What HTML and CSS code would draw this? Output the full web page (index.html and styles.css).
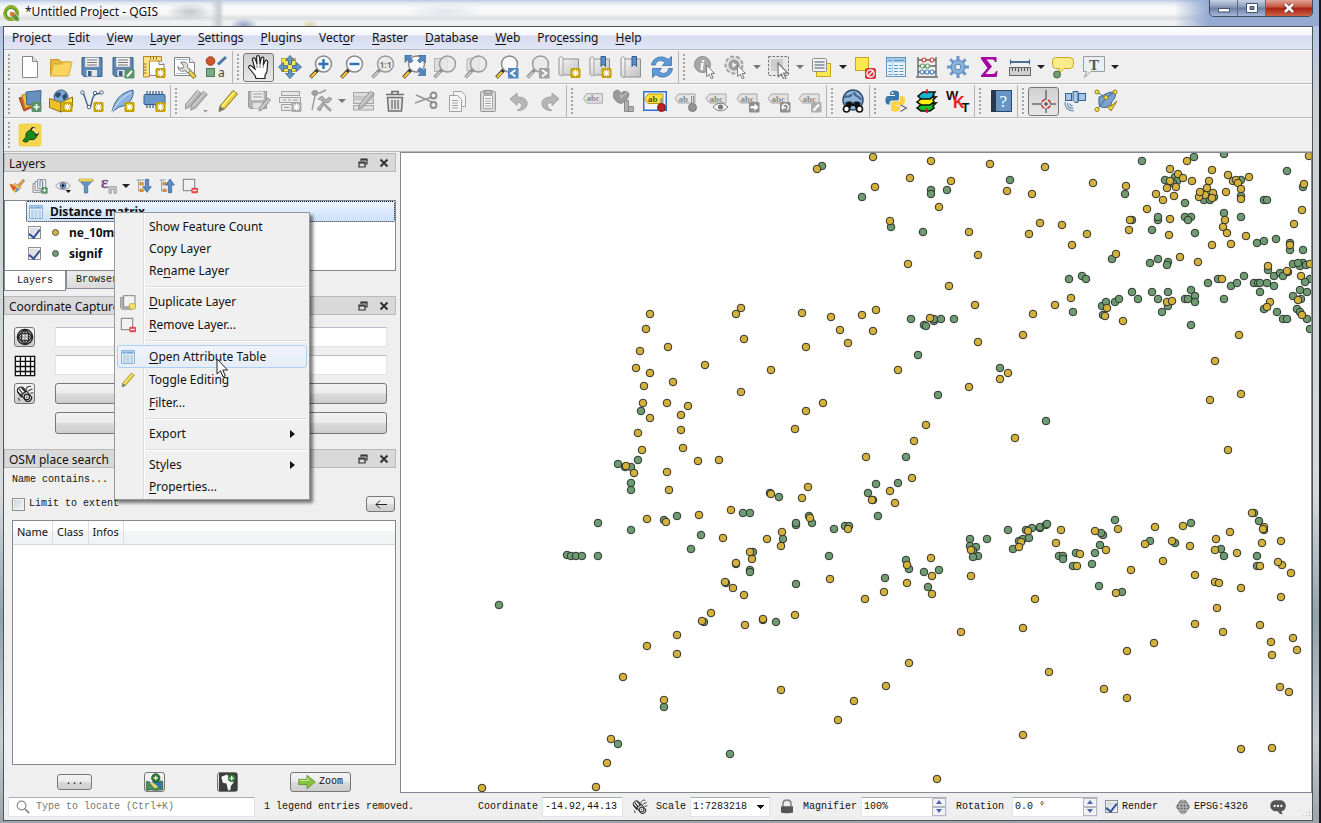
FILE: index.html
```html
<!DOCTYPE html>
<html lang="en">
<head>
<meta charset="utf-8">
<title>*Untitled Project - QGIS</title>
<link rel="stylesheet" href="styles.css">
</head>
<body>
<svg class="defs" aria-hidden="true">
<defs>
<linearGradient id="gy" x1="0" y1="0" x2="0" y2="1"><stop offset="0" stop-color="#fff9a0"/><stop offset="1" stop-color="#fbdd3a"/></linearGradient>
<linearGradient id="gg" x1="0" y1="0" x2="1" y2="1"><stop offset="0" stop-color="#fdfdfd"/><stop offset="1" stop-color="#bdbdbd"/></linearGradient>
<marker id="my" markerWidth="10" markerHeight="10" refX="5" refY="5" markerUnits="userSpaceOnUse"><circle cx="5" cy="5" r="3.8" fill="#d3b13a" stroke="#2f2f2c"/></marker>
<marker id="mg" markerWidth="10" markerHeight="10" refX="5" refY="5" markerUnits="userSpaceOnUse"><circle cx="5" cy="5" r="3.8" fill="#6f9b72" stroke="#2c352d"/></marker>

<g id="star"><rect x="13.500" y="13" width="10" height="10" rx="1.500" fill="#c4a000"/><path d="M18.500 14.500v7M15 18h7M16 15.500l5 5M21 15.500l-5 5" stroke="#fff" stroke-width="1.200"/></g>
<g id="stargray"><rect x="13.500" y="13" width="10" height="10" rx="1.500" fill="#a9a9a9"/><path d="M18.500 14.500v7M15 18h7M16 15.500l5 5M21 15.500l-5 5" stroke="#fff" stroke-width="1.200"/></g>
<g id="lens"><path d="M9.500 14L1.500 22.500" stroke="#333" stroke-width="3.600"/><path d="M7 17L2 22.300" stroke="#fcc72e" stroke-width="2.400"/><circle cx="14.500" cy="9" r="8" fill="#f6f8fa" stroke="#888" stroke-width="1.400"/></g>
<g id="lensgray"><path d="M9.500 14L1.500 22.500" stroke="#909090" stroke-width="3.400"/><path d="M7 17L2 22.300" stroke="#cfcfcf" stroke-width="1.600"/><circle cx="14.500" cy="9" r="8" fill="#e9e9e9" fill-opacity=".8" stroke="#999" stroke-width="1.400"/></g>
<g id="tag"><path d="M1.500 12L5 7h16.500v10H5z" fill="#e4e4e4" stroke="#a4a4a4"/><text x="5" y="15" font-family="Liberation Serif" font-weight="bold" font-size="9" fill="#8a8a8a">abc</text></g>
<g id="tagsm"><path d="M1 9.500L4.500 5H21v9H4.500z" fill="#e4e4e4" stroke="#a4a4a4"/><text x="4.500" y="12.500" font-family="Liberation Serif" font-weight="bold" font-size="9" fill="#8a8a8a">abc</text></g>
<g id="cursor"><path d="M0 0l8 8.500H4.600l2 4.500-1.800.8-2-4.600L.2 11.500z" fill="#fff" stroke="#777"/></g>
<g id="floppy"><path d="M2 2.500h20v19H4L2 19.500z" fill="#5b86b8" stroke="#3d618b"/><path d="M5 2.500h14v9.500H5z" fill="#f3f3f3" stroke="#9a9a9a" stroke-width=".6"/><path d="M7 5h10M7 7.500h10M7 10h10" stroke="#777"/><path d="M6.500 15h10.500v6.500H6.500z" fill="#e8e8e8"/><path d="M8 16h3.500v5H8z" fill="#3c5e87"/></g>
<g id="pencil"><path d="M4 17L17 1.500l4.500 3.500L8.500 20 3 22.500z" fill="#e9cf3b" stroke="#8a7726"/><path d="M5.500 18L18.500 3" stroke="#fff39a" stroke-width="1.500"/><path d="M4 17l4.500 3L3 22.500z" fill="#777"/></g>
<g id="pencilgray"><path d="M4 17L17 1.500l4.500 3.500L8.500 20 3 22.500z" fill="#b4b4b4" stroke="#929292"/><path d="M5.500 18L18.500 3" stroke="#d6d6d6" stroke-width="1.300"/></g>
<g id="tablei"><rect x="2.500" y="2.500" width="19" height="19" fill="#e8f3fb" stroke="#6594bd"/><path d="M3 3h18v4.500H3z" fill="#a3cae8"/><path d="M8.500 7.500v14" stroke="#a9cce8"/><path d="M4.500 5.500h3M10 5.500h9.500M4.500 10.500h3M10 10.500h4M15.500 10.500h4M4.500 13.500h3M10 13.500h4M15.500 13.500h4M4.500 16.500h3M10 16.500h4M15.500 16.500h4M4.500 19.500h3M10 19.500h4M15.500 19.500h4" stroke="#5f93c1"/></g>

<symbol id="new" viewBox="0 0 24 24"><path d="M4.500 1.500h10l5 5v16h-15z" fill="#fff" stroke="#858585"/><path d="M14.500 1.500v5h5" fill="#e5e5e5" stroke="#858585"/></symbol>
<symbol id="open" viewBox="0 0 24 24"><path d="M1.500 21V4.500H10l2 2.500h9v4" fill="#e5b83c" stroke="#c8962a"/><path d="M1.500 21l3-12h8l2-2H23l-3.500 14z" fill="#fbd560" stroke="#d9a936"/></symbol>
<symbol id="save" viewBox="0 0 24 24"><use href="#floppy"/></symbol>
<symbol id="saveas" viewBox="0 0 24 24"><use href="#floppy"/><rect x="13.500" y="14" width="10" height="9.500" rx="1.500" fill="#5a9167"/><path d="M16 21.500l5-5.500" stroke="#fff" stroke-width="2"/></symbol>
<symbol id="layout" viewBox="0 0 24 24"><path d="M5 4.500h12l5 5v11H5z" fill="#fff" stroke="#858585"/><path d="M17 4.500v5h5" fill="#eee" stroke="#858585"/><path d="M1.500 1.500h18v4.500H7.500v16h-6z" fill="#fbe287" stroke="#b58a1a"/><path d="M8.500 2v2.500M11.500 2v2.500M14.500 2v2.500M2 9h2.500M2 12h2.500M2 15h2.500M2 18h2.500" stroke="#8a6d1a"/><use href="#star"/></symbol>
<symbol id="layouts" viewBox="0 0 24 24"><path d="M1.500 2.500h15l5 5v13h-20z" fill="#fff" stroke="#858585"/><path d="M16.500 2.500v5h5" fill="#eee" stroke="#858585"/><path d="M3.500 4.500h12M3.500 18.500h10" stroke="#9bb4cf"/><path d="M15 15l7 7.500" stroke="#7d6a25" stroke-width="4.500"/><path d="M15.500 15.500l6 6.500" stroke="#f0d050" stroke-width="2.800"/><path d="M7.500 7.500l3 3-.5 2.500-3 .5-2-2c0 4 4 6 7 4l3 2.500 2.500-2.500-3-3.500c1-4-2-6-7-4.500z" fill="#dcdcdc" stroke="#777"/></symbol>
<symbol id="style" viewBox="0 0 24 24"><circle cx="6.500" cy="6" r="4.300" fill="#cf552b" stroke="#9c3a18"/><path d="M14 9.500L22 2" stroke="#4f79a8" stroke-width="3"/><rect x="2.500" y="13.500" width="8" height="8" fill="#79ab84" stroke="#4d7d58"/><text x="14" y="22" font-family="Noto Sans" font-size="12" fill="#444">a</text></symbol>
<symbol id="hand" viewBox="0 0 24 24"><path d="M9 23.500l-1-3-6-7.500c-1-2 1-3.300 2.500-2L8 14 5.500 5c-.5-2.500 2.200-3 2.900-.8L10 9 9.600 2.500c0-2.400 2.800-2.400 3 0L13 9l1.100-5.500c.5-2.200 3-1.700 2.700.4L16.300 10l1.600-3.600c.9-2 3.200-1.200 2.800.9-.7 3.500 0 6.200-1 9.700L18 20.500v3z" fill="#fff" stroke="#222" stroke-width="1.200"/><path d="M10 9v4M13 9v4M16.300 10v3" stroke="#777"/></symbol>
<symbol id="pansel" viewBox="0 0 24 24"><rect x="3.500" y="3.500" width="14" height="13" fill="#fce94f" stroke="#c9a51d"/><path d="M12 0.500l4.500 5h-3v4h-3v-4h-3zM12 23.500l4.500-5h-3v-4h-3v4h-3zM.5 12l5-4.500v3h4v3h-4v3zM23.500 12l-5-4.500v3h-4v3h4v3z" fill="#6796c8" stroke="#355d8c" stroke-width=".8"/></symbol>
<symbol id="zin" viewBox="0 0 24 24"><use href="#lens"/><path d="M14.500 4v10M9.500 9h10" stroke="#2f6fb5" stroke-width="2.400"/></symbol>
<symbol id="zout" viewBox="0 0 24 24"><use href="#lens"/><path d="M9.500 9h10" stroke="#2f6fb5" stroke-width="2.400"/></symbol>
<symbol id="z11" viewBox="0 0 24 24"><use href="#lensgray"/><text x="8.500" y="12.500" font-family="Noto Sans" font-weight="bold" font-size="8.500" fill="#777">1:1</text></symbol>
<symbol id="zfull" viewBox="0 0 24 24"><use href="#lens"/><path d="M3 0h7L8 2.500l3 3L8.500 8l-3-3L3 7.500zM23.500 0v7.500L21 5l-3 3-2.500-2.500 3-3L16 0zM23.500 20.500H16l2.500-2.500-3-3 2.500-2.500 3 3 2.500-2.500z" fill="#5286bf" stroke="#315a88" stroke-width=".6"/></symbol>
<symbol id="zsel" viewBox="0 0 24 24"><rect x="1.500" y="3.500" width="13" height="13" fill="#dcdcdc" stroke="#b5b5b5"/><use href="#lensgray"/></symbol>
<symbol id="zlayer" viewBox="0 0 24 24"><path d="M3 4l12-2v14H3z" fill="#dedede" stroke="#b5b5b5"/><use href="#lensgray"/></symbol>
<symbol id="zlast" viewBox="0 0 24 24"><use href="#lens"/><rect x="13" y="13" width="10.500" height="10.500" fill="#5286bf"/><path d="M20.500 15l-4.500 3.200 4.500 3.200" fill="none" stroke="#fff" stroke-width="1.800"/></symbol>
<symbol id="znext" viewBox="0 0 24 24"><use href="#lensgray"/><rect x="13" y="13" width="10.500" height="10.500" fill="#a2a2a2"/><path d="M16 15l4.500 3.200-4.500 3.200" fill="none" stroke="#fff" stroke-width="1.800"/></symbol>
<symbol id="mapnew" viewBox="0 0 24 24"><path d="M2 3c2-2 4-1 4 1h15.500v16H6c-2 2-4 0-4-1z" fill="url(#gg)" stroke="#909090"/><path d="M6 4v16" stroke="#a2a2a2"/><use href="#star"/></symbol>
<symbol id="bmnew" viewBox="0 0 24 24"><path d="M2 3c2-2 4-1 4 1h15.500v16H6c-2 2-4 0-4-1z" fill="url(#gg)" stroke="#909090"/><path d="M6 4v16" stroke="#a2a2a2"/><path d="M13 1.500h4.500v10L15.200 9 13 11.500z" fill="#5c8fc6" stroke="#2f5b8d"/><use href="#star"/></symbol>
<symbol id="bm" viewBox="0 0 24 24"><path d="M2 3c2-2 4-1 4 1h15.500v18H6c-2 1-4 0-4-2z" fill="url(#gg)" stroke="#909090"/><path d="M6 4v18" stroke="#a2a2a2"/><path d="M13 1.500h4.500v10L15.200 9 13 11.500z" fill="#5c8fc6" stroke="#2f5b8d"/></symbol>
<symbol id="refresh" viewBox="0 0 24 24"><path d="M1.500 10C2 3 12-1 18 4.500L21.500 1.500v9h-9L15 7.500C11 4 6 5.500 5.500 10zM22.500 13.500C22 21 12 25 6 19.500l-3.500 3v-9h9L9 16.500c4 3.500 9 2 9.500-3z" fill="#5f9bd8" stroke="#3a70ab" stroke-width=".8"/></symbol>
<symbol id="info" viewBox="0 0 24 24"><circle cx="9.500" cy="9.500" r="8" fill="#a8a8a8" stroke="#8d8d8d"/><text x="7" y="15" font-family="Liberation Serif" font-style="italic" font-weight="bold" font-size="15" fill="#fff">i</text><use href="#cursor" x="13.500" y="10"/></symbol>
<symbol id="action" viewBox="0 0 24 24"><circle cx="10" cy="10" r="8.500" fill="#e2e2e2" stroke="#a0a0a0" stroke-width="2" stroke-dasharray="4 2"/><circle cx="10" cy="10" r="5" fill="#a2a2a2" stroke="#8e8e8e"/><path d="M8.500 7.500v5l4-2.500z" fill="#fff"/><use href="#cursor" x="13.500" y="10"/></symbol>
<symbol id="select" viewBox="0 0 24 24"><rect x="1.500" y="1.500" width="20" height="19" fill="#e6e6e6" stroke="#777" stroke-dasharray="2.500 1.500"/><rect x="4" y="4" width="12" height="12" fill="#cdcdcd"/><g transform="translate(11 8) scale(1.200)"><use href="#cursor"/></g></symbol>
<symbol id="selform" viewBox="0 0 24 24"><rect x="6.500" y="8.500" width="14" height="13" fill="#fce94f" stroke="#c9a51d"/><rect x="2.500" y="3.500" width="14" height="13" rx="1" fill="#f1f1f1" stroke="#8c8c8c"/><path d="M4.500 7h10M4.500 10h10M4.500 13h10" stroke="#7d8b98" stroke-width="1.400"/></symbol>
<symbol id="desel" viewBox="0 0 24 24"><rect x="2.500" y="2.500" width="13" height="13" fill="#fce94f" stroke="#c9a51d"/><rect x="12" y="13" width="11" height="11" rx="2" fill="#d8383e"/><circle cx="17.500" cy="18.500" r="3.600" fill="none" stroke="#fff" stroke-width="1.300"/><path d="M15 21l5-5" stroke="#fff" stroke-width="1.300"/></symbol>
<symbol id="table" viewBox="0 0 24 24"><use href="#tablei"/></symbol>
<symbol id="abacus" viewBox="0 0 24 24"><path d="M3 21V2M21 21V2M3 5h18M3 11h18M3 17h18M1 22h22" stroke="#666" stroke-width="1.400"/><g fill="#fff" stroke-width="1.200"><g stroke="#c33"><circle cx="9" cy="5" r="2"/><circle cx="17" cy="5" r="2"/></g><g stroke="#5a9a5e"><circle cx="7.500" cy="11" r="2"/><circle cx="12.500" cy="11" r="2"/></g><g stroke="#4a83bd"><circle cx="7" cy="17" r="2"/><circle cx="12" cy="17" r="2"/><circle cx="17" cy="17" r="2"/></g></g></symbol>
<symbol id="gear" viewBox="0 0 24 24"><path d="M12 1v22M1 12h22M4.300 4.300l15.400 15.400M19.700 4.300L4.300 19.700" stroke="#6a96cb" stroke-width="3"/><circle cx="12" cy="12" r="7" fill="#8ab0dc" stroke="#5a86bd"/><circle cx="12" cy="12" r="2.800" fill="#efefef" stroke="#5a86bd"/></symbol>
<symbol id="sigma" viewBox="0 0 24 24"><path d="M4 2h15.500v5h-1.500c-.5-2-1.500-2.500-4-2.500H9.500L15 11.500 8.500 19H15c2.500 0 3.500-1 4.200-3h1.300l-.8 6H4v-1.500L10.500 13 4 4z" fill="#a504a0"/></symbol>
<symbol id="ruler" viewBox="0 0 24 24"><path d="M2.500 7h19" stroke="#39628f" stroke-width="1.800"/><path d="M2.500 4.500v5M21.500 4.500v5" stroke="#39628f"/><rect x="1.500" y="12.500" width="21" height="8" fill="#cfcfcf" stroke="#666"/><path d="M4.500 13v3M7.500 13v3M10.500 13v4M13.500 13v3M16.500 13v3M19.500 13v3" stroke="#555"/></symbol>
<symbol id="tip" viewBox="0 0 24 24"><path d="M4.500 2.500h14q4 0 4 4v3q0 4-4 4H13l-6 6 1.500-6h-4q-3-.5-3-4v-3q0-4 3-4z" fill="#fbeb8c" stroke="#c9a51d"/><circle cx="6" cy="19.500" r="3.500" fill="#729e6f" stroke="#47663f"/></symbol>
<symbol id="anno" viewBox="0 0 24 24"><path d="M1.500 1.500h21v15H9l-6.500 6 2-6h-3z" fill="#e9f0f4" stroke="#949ea5"/><text x="7" y="14.500" font-family="Liberation Serif" font-weight="bold" font-size="15" fill="#555">T</text></symbol>

<symbol id="dsm" viewBox="0 0 24 24"><path d="M1 9l11-3 3 12-9 4z" fill="#d4572d" stroke="#96401d"/><path d="M4 6l12-3 2 13-11 3z" fill="#f0c23a" stroke="#b08a22"/><path d="M8 3l15-1.500-.5 14L9 16z" fill="#6590c0" stroke="#3c628f"/><rect x="13.500" y="13" width="10" height="10" rx="1.500" fill="#5a9167"/><path d="M18.500 15v6M15.500 18h6" stroke="#fff" stroke-width="1.600"/></symbol>
<symbol id="gpkg" viewBox="0 0 24 24"><circle cx="12" cy="8" r="7" fill="#7fa8d2" stroke="#39597d"/><path d="M7 4l4-1 1 3-3 3-3-2zM13 7l4-3 1 4-3 4z" fill="#2d4b70"/><path d="M.5 9.500L12 13.500v9.500L.5 18.500z" fill="#eec12c" stroke="#8c6f13"/><path d="M12 13.500L23.500 8v9.500L12 23z" fill="#fbe04c" stroke="#8c6f13"/><use href="#star"/></symbol>
<symbol id="shp" viewBox="0 0 24 24"><path d="M2.500 3.500c4 5 3 12 7 15 4-3 0-15 11-14" fill="none" stroke="#3f5f80" stroke-width="1.400"/><g fill="#fff" stroke="#3f5f80"><circle cx="2.500" cy="3.500" r="1.700"/><circle cx="9" cy="18" r="1.800"/><circle cx="15" cy="4" r="1.700"/><circle cx="21.500" cy="3.500" r="1.700"/></g><use href="#star"/></symbol>
<symbol id="feather" viewBox="0 0 24 24"><path d="M1 23C3 13 8 4 22 1c1 6-2 15-14 17z" fill="#8db4de" stroke="#3f6795"/><path d="M1 23C6 14 11 8 20 3.500" fill="none" stroke="#dce9f6"/><use href="#star"/></symbol>
<symbol id="chip" viewBox="0 0 24 24"><path d="M5 2v17M8 2v17M11 2v17M14 2v17M17 2v17M20 2v17" stroke="#3f618b" stroke-width="1.300"/><rect x="2" y="5.500" width="21" height="10" rx="1" fill="#6a98ca" stroke="#355d8c"/><use href="#star"/></symbol>
<symbol id="edits" viewBox="0 0 24 24"><g transform="translate(-3 0) scale(.9)"><use href="#pencilgray"/></g><g transform="translate(3 1) scale(.9)"><use href="#pencilgray"/></g><path d="M18 21h5l-2.500 2.500z" fill="#999"/></symbol>
<symbol id="edit" viewBox="0 0 24 24"><use href="#pencil"/></symbol>
<symbol id="saveed" viewBox="0 0 24 24"><path d="M1.500 2.500h18v17H3l-1.500-1.500z" fill="#b3b3b3" stroke="#999"/><path d="M4.500 2.500h12v8.500h-12z" fill="#efefef"/><path d="M6 5h9M6 8h9" stroke="#999"/><path d="M6 14h9v5.500H6z" fill="#e1e1e1"/><path d="M12 22l1-4 8-9 2.500 2-8 9.500z" fill="#c9c9c9" stroke="#8d8d8d"/></symbol>
<symbol id="addrec" viewBox="0 0 24 24"><g fill="#e7e7e7" stroke="#a2a2a2"><rect x="3.500" y="2.500" width="18" height="4"/><rect x="1.500" y="8.500" width="21" height="5"/><rect x="3.500" y="15.500" width="17" height="6"/></g><path d="M5 11h3M10 11h3M15 11h5M6 18.500h5" stroke="#a2a2a2"/><use href="#stargray"/></symbol>
<symbol id="vertex" viewBox="0 0 24 24"><path d="M2 4h9l6-3M6 1v6L3 21" fill="none" stroke="#9a9a9a" stroke-width="1.400"/><rect x="4" y="2" width="4" height="4" fill="#aaa" stroke="#888"/><path d="M9 10l4-3 4 4 3-3 3 2-4 4-3-1-5 9-3-2 7-8z" fill="#b2b2b2" stroke="#989898"/><path d="M13 13l9 9" stroke="#a3a3a3" stroke-width="2.500"/></symbol>
<symbol id="multi" viewBox="0 0 24 24"><g fill="#ddd" stroke="#a5a5a5"><rect x="1.500" y="3.500" width="20" height="4.500"/><rect x="1.500" y="10" width="20" height="4.500"/><rect x="1.500" y="16.500" width="20" height="4.500"/></g><g transform="translate(4 1) scale(.85)"><use href="#pencilgray"/></g></symbol>
<symbol id="trash" viewBox="0 0 24 24"><path d="M4.500 8.500h15l-1 13.500h-13z" fill="#e3e3e3" stroke="#707070" stroke-width="1.500"/><path d="M3 5.500h18M9 5V2.500h6V5" fill="none" stroke="#707070" stroke-width="1.700"/><path d="M9 11v9M12 11v9M15 11v9" stroke="#707070" stroke-width="1.300"/></symbol>
<symbol id="cut" viewBox="0 0 24 24"><path d="M2 6l16 7M1 14l17-6" stroke="#999" stroke-width="1.800"/><g fill="none" stroke="#8b8b8b" stroke-width="1.800"><circle cx="19.500" cy="6.500" r="3"/><circle cx="19.500" cy="16" r="3"/></g></symbol>
<symbol id="copy" viewBox="0 0 24 24"><path d="M8.500 2.500h8l4 4v11h-12z" fill="#f5f5f5" stroke="#a2a2a2"/><path d="M4.500 6.500h8l4 4v12h-12z" fill="#f5f5f5" stroke="#a2a2a2"/><path d="M7 11.500h6M7 14h6M7 16.500h6M7 19h6" stroke="#a2a2a2"/></symbol>
<symbol id="paste" viewBox="0 0 24 24"><rect x="4.500" y="2.500" width="15" height="20" rx="1" fill="#d8d8d8" stroke="#989898"/><path d="M7.500 6.500h9v13h-9z" fill="#f7f7f7" stroke="#aaa"/><path d="M8 1.500h8V5H8z" fill="#bcbcbc" stroke="#8d8d8d"/><path d="M9 9.500h6M9 12h6M9 14.500h6M9 17h6" stroke="#a2a2a2"/></symbol>
<symbol id="undo" viewBox="0 0 24 24"><path d="M3 10l7-6v4c9 0 12 5 9 10-1.500 2.500-5 3.500-9 3.500 5-2 7-8 0-8v3z" fill="#b6b6b6" stroke="#a2a2a2"/></symbol>
<symbol id="redo" viewBox="0 0 24 24"><path d="M21 10l-7-6v4c-9 0-12 5-9 10 1.500 2.500 5 3.500 9 3.500-5-2-7-8 0-8v3z" fill="#b6b6b6" stroke="#a2a2a2"/></symbol>
<symbol id="label" viewBox="0 0 24 24"><g transform="translate(1 -2) scale(.95)"><use href="#tag"/></g></symbol>
<symbol id="diagram" viewBox="0 0 24 24"><path d="M2 3c3-3 6-2 7 2 2-4 7-3 8 0-1 5-4 8-8 9.500C3 13 0 8 2 3z" fill="#9c9c9c" stroke="#878787"/><path d="M9 5v4l6-6" fill="none" stroke="#c9c9c9"/><path d="M12.500 11.500h4v11h-4zM16.500 17.500h5v5h-5z" fill="#b0b0b0" stroke="#888"/></symbol>
<symbol id="pinlab" viewBox="0 0 24 24"><rect x=".75" y="2.750" width="22.500" height="18.500" fill="#f4f4f0" stroke="#2e6fd6" stroke-width="1.500"/><path d="M1.500 10L5 5h15v9.500H5z" fill="#fbe33d" stroke="#b29a1d"/><text x="5" y="13" font-family="Liberation Serif" font-weight="bold" font-size="9" fill="#5d5213">ab</text><path d="M18.500 9v8" stroke="#999" stroke-width="2.500"/><circle cx="18.500" cy="18.500" r="4" fill="#b9242a" stroke="#8b1418"/></symbol>
<symbol id="pingray" viewBox="0 0 24 24"><path d="M1 9.500L4.500 5H21v9H4.500z" fill="#e4e4e4" stroke="#a4a4a4"/><text x="4.500" y="12.500" font-family="Liberation Serif" font-weight="bold" font-size="9" fill="#8a8a8a">ab</text><path d="M18.500 7v9" stroke="#777" stroke-width="3"/><path d="M18.500 7v9" stroke="#ddd" stroke-width="1.500"/><circle cx="18.500" cy="18.500" r="4" fill="#949494" stroke="#7d7d7d"/></symbol>
<symbol id="eyelab" viewBox="0 0 24 24"><use href="#tagsm"/><path d="M8 18c4-5 11-5 15 0-4 5-11 5-15 0z" fill="#f2f2f2" stroke="#777"/><circle cx="15.500" cy="18" r="2.500" fill="#777"/></symbol>
<symbol id="movelab" viewBox="0 0 24 24"><use href="#tagsm"/><rect x="13" y="13" width="10.500" height="10.500" rx="1" fill="#8e8e8e"/><path d="M14.500 17h4v-2.500l4 3.700-4 3.700v-2.500h-4z" fill="#fff"/></symbol>
<symbol id="rotlab" viewBox="0 0 24 24"><use href="#tagsm"/><rect x="13" y="13" width="10.500" height="10.500" rx="1" fill="#8e8e8e"/><path d="M16 20.500a3.200 3.200 0 1 1 4 .5M16 16v3l3-.5" fill="none" stroke="#fff" stroke-width="1.300"/></symbol>
<symbol id="chglab" viewBox="0 0 24 24"><use href="#tagsm"/><rect x="13" y="13" width="10.500" height="10.500" rx="1" fill="#b0b0b0"/><path d="M15.500 21.500l5.500-6" stroke="#fff" stroke-width="2"/></symbol>
<symbol id="metas" viewBox="0 0 24 24"><circle cx="12" cy="11" r="10" fill="#8fb2d6" stroke="#2f4f74" stroke-width="1.500"/><path d="M3 8c4-2 5 2 8-3M13 3c0 5 5 3 7 8M4 14h16" fill="none" stroke="#3e6390" stroke-width="2"/><path d="M6.500 12.500h4v2h3v-2h4L22 20h-7l-1.500-3h-3L9 20H2z" fill="#111"/><g fill="#fff" stroke="#111" stroke-width="1.600"><circle cx="5.500" cy="20" r="3"/><circle cx="18.500" cy="20" r="3"/></g></symbol>
<symbol id="python" viewBox="0 0 24 24"><path d="M6 6V4c0-3.500 9-3.500 9 0v5c0 2-1 2.500-2.500 2.500H8c-2 0-2.500 1.500-2.500 4H4C.5 15.500.5 7 4 7h7V6z" fill="#3b77a8"/><path d="M16 7h2.500c3.500 0 3.500 9 0 9H11v1h5v3c0 3.500-9 3.500-9 0v-5c0-2 1-2.500 2.500-2.500h4c2 0 2.500-1 2.500-3z" fill="#fcd245"/><circle cx="8.500" cy="4" r="1" fill="#fff"/><path d="M16.500 16l6 3-6 3.500" fill="none" stroke="#666" stroke-width="1.200"/></symbol>
<symbol id="stack" viewBox="0 0 24 24"><g stroke="#111" stroke-width="1.600"><path d="M2 19l5-4 14-1-3 3 1 2-4 3H6z" fill="#17c42c"/><path d="M2 13l5-4 14-1-3 3 1 2-4 3H6z" fill="#fff200"/><path d="M3 7l5-4h12l-2 3 1 1-4 3H6z" fill="#12b5c9"/></g><path d="M12 0v5M12 19v5" stroke="#e11" stroke-width="1.500"/></symbol>
<symbol id="wkt" viewBox="0 0 24 24"><g font-family="Liberation Sans" font-weight="bold"><text x="0" y="11" font-size="13" fill="#111">W</text><text x="7" y="19" font-size="16" fill="#ee1c1c">K</text><text x="15.500" y="23" font-size="13" fill="#111">T</text></g></symbol>
<symbol id="help" viewBox="0 0 24 24"><rect x="2.500" y="1.500" width="20" height="21" fill="#6793c5" stroke="#2e4a6b"/><path d="M2 1h5v22H2z" fill="#28394d"/><text x="10.500" y="18" font-family="Liberation Serif" font-size="17" fill="#fff">?</text></symbol>
<symbol id="cross" viewBox="0 0 24 24"><path d="M0 15h10M18 15h6M14 1v10M14 19v5" stroke="#333"/><circle cx="14" cy="15" r="4.500" fill="none" stroke="#c33" stroke-width="1.500" stroke-dasharray="4.070 3" stroke-dashoffset="-1.500"/><path d="M12 15h4M14 13v4" stroke="#333"/></symbol>
<symbol id="gps" viewBox="0 0 24 24"><g fill="#a6c6e8" stroke="#365f8e"><rect x="2.500" y="4.500" width="6" height="7"/><rect x="15.500" y="4.500" width="7" height="7"/><path d="M10 2.500h5v11h-3l-2-2z"/></g><path d="M2 13c0 6 3 9 9 9M4.500 14c0 3 2 5.500 6 5.500M7 14.500c0 1.500 1 2.500 3 2.500" fill="none" stroke="#6b8db3" stroke-width="1.200"/></symbol>
<symbol id="topo" viewBox="0 0 24 24"><path d="M5 8c5-1 6-5 16-5 2 7-4 8-4 13-4 4-13 3-12-2z" fill="#7ba1cf" stroke="#38608f"/><path d="M3 3l9 6 8-6M3 21l9-12" fill="none" stroke="#45658c"/><g fill="#fbe33d" stroke="#8f7c17"><circle cx="3" cy="3" r="2"/><circle cx="21" cy="3" r="2"/><circle cx="12" cy="8.500" r="2"/><circle cx="3" cy="20.500" r="2"/></g><path d="M13 17l4 5 6-10-6 5z" fill="#fbd33d" stroke="#8f7c17"/></symbol>
<symbol id="plug" viewBox="0 0 24 24"><rect x=".5" y=".5" width="23" height="23" rx="3" fill="#f2d54c"/><path d="M5 18c1-3 3-2 3-5s1-5 5-6l6 5c-1 4-3 5-6 4.500-3-.5-2 2.500-5 2.500-1.500 0-2-.5-3-1z" fill="#178a1c" stroke="#0a3b0c"/><path d="M13 7c0-2 2-3 4-1.500M17.500 12c2 .5 3-1 2-3" fill="none" stroke="#222" stroke-width="1.500"/><path d="M15 5.500l2 1M18 9l2 1" stroke="#eee" stroke-width="1.500"/></symbol>
<symbol id="brush" viewBox="0 0 24 24"><path d="M13 11L21 2l2.500 2L16 13z" fill="#e0a84f" stroke="#94672a"/><path d="M9 8l9 6-2 3-9-6z" fill="#e8c07a" stroke="#b07f36"/><path d="M1 9c3 1 5 1 7 1l8 6c-2 4-4 6-7 6-3-2-7-7-8-13z" fill="#f2b63f"/><path d="M1 9l6 1.500L4 14z" fill="#d8432a"/><path d="M3 14l5-2 3 2-4 5z" fill="#e0552f"/><path d="M9 21l2-6 4 1c-1 3-3 5-6 5z" fill="#5f93c8"/></symbol>
<symbol id="addgrp" viewBox="0 0 24 24"><g fill="#f7f7f7" stroke="#7c7c7c" stroke-width="1.300"><path d="M1.500 8.500h12v13h-12z"/><path d="M4.500 5.500h13v13h-13z"/><path d="M8.500 2.500h12v13h-12z"/></g><path d="M12 13V6c0-3 4-3 4 0v9" fill="none" stroke="#3d668f" stroke-width="1.400"/><rect x="14" y="14" width="9.500" height="9.500" rx="1.500" fill="#5a9167"/><path d="M18.700 16v5.500M16 18.700h5.500" stroke="#fff" stroke-width="1.500"/></symbol>
<symbol id="eye" viewBox="0 0 24 24"><path d="M1 12C6 4 18 4 23 12c-5 7-17 7-22 0z" fill="#f3f3f3" stroke="#888" stroke-width="1.300"/><circle cx="12" cy="11.500" r="4.500" fill="#6d9ccc" stroke="#41597a"/><circle cx="12" cy="11.500" r="2" fill="#222"/><path d="M16 18h8l-4 4.500z" fill="#111"/></symbol>
<symbol id="filter" viewBox="0 0 24 24"><path d="M1 3h22l-8.500 9v10.500h-5V12z" fill="#6593c7" stroke="#3b6594"/><path d="M2 1.500h20v3.500H2z" fill="#f5e169" stroke="#b8a12a"/></symbol>
<symbol id="eps" viewBox="0 0 24 24"><text x="0" y="15" font-family="Liberation Serif" font-size="26" fill="#7c4a86" stroke="#7c4a86">ε</text><path d="M12 23V13h11v10h-3.500v-6h-4v6z" fill="#c9c9c9" stroke="#888"/></symbol>
<symbol id="expand" viewBox="0 0 24 24"><path d="M1 3h11M4 3v17M4 9h8M4 19h8" stroke="#888" fill="none" stroke-width="1.300"/><g fill="#f6a943" stroke="#c37816"><rect x="6.500" y="6.500" width="4" height="4"/><rect x="6.500" y="16.500" width="4" height="4"/></g><path d="M14 2h5v11h4l-6.500 8.500L10 13h4z" fill="#5a8cc5" stroke="#315a88"/></symbol>
<symbol id="collapse" viewBox="0 0 24 24"><path d="M1 3h9M4 3v17M4 9h8M4 19h8" stroke="#888" fill="none" stroke-width="1.300"/><g fill="#f6a943" stroke="#c37816"><rect x="6.500" y="6.500" width="4" height="4"/><rect x="6.500" y="16.500" width="4" height="4"/></g><path d="M14 22h5V10.500h4L16.500 1.500 10 10.500h4z" fill="#5a8cc5" stroke="#315a88"/></symbol>
<symbol id="rmlay" viewBox="0 0 24 24"><rect x="2" y="2" width="17" height="17" fill="#f2f2f2" stroke="#858585" stroke-width="1.600"/><rect x="14" y="14.500" width="10" height="8.500" rx="2" fill="#e8474d"/><path d="M16 18.700h6" stroke="#fff" stroke-width="2"/></symbol>
<symbol id="dup" viewBox="0 0 24 24"><path d="M1 5h4v14h13v4H3l-2-2z" fill="#bbb" stroke="#777"/><rect x="5.500" y="2.500" width="17" height="17" fill="#f4f4f4" stroke="#858585" stroke-width="1.500"/><rect x="14" y="14.500" width="9" height="8" rx="1" fill="#f5e169" stroke="#b39a22"/></symbol>
<symbol id="crs" viewBox="0 0 24 24"><circle cx="12" cy="12" r="10" fill="#c4c4c4" stroke="#222" stroke-width="2"/><path d="M12 2L2 12l10 10 10-10zM12 2v20M2 12h20" fill="none" stroke="#222" stroke-width="1.600"/><rect x="7.500" y="7.500" width="9" height="9" fill="#e6e6e6" fill-opacity=".6" stroke="#222" stroke-width="1.400"/></symbol>
<symbol id="grid" viewBox="0 0 24 24"><path d="M1.500 1.500h21v21h-21zM7 1v22M12.500 1v22M18 1v22M1 7h22M1 12.500h22M1 18h22" fill="#fff" stroke="#111" stroke-width="1.500"/></symbol>
<symbol id="mouse" viewBox="0 0 24 24"><path d="M2 9c-1-5 4-8 8-5l4 5-7 7z" fill="#fff" stroke="#222" stroke-width="1.500"/><path d="M4 5l6 8M7 3l6 7M2 9l6 6" stroke="#222" stroke-width="1.600"/><path d="M7 13l7-5 6 7c3 4-3 9-7 6z" fill="#bbb" stroke="#222" stroke-width="1.500"/><circle cx="14.500" cy="16" r="3.500" fill="#f3f3f3" stroke="#222" stroke-width="1.500"/><circle cx="14.500" cy="16" r="1" fill="#222"/><path d="M13 7c1-5 4-6 7-5M16 8l6-3M19 11l4-1M3 17l2 4" fill="none" stroke="#444" stroke-width="1.500"/></symbol>
<symbol id="addmap" viewBox="0 0 24 24"><path d="M1 11l6 2 5-3 10 1v11l-9 1-7-1-5 1z" fill="#4e9448" stroke="#1f5636"/><path d="M2 12l10 10 2-5 6 5V12z" fill="#2e74ae"/><path d="M5 13l7 8 4-3-8-6z" fill="#e9d95b"/><circle cx="13" cy="6.500" r="5.500" fill="#2f7a31" stroke="#164a19"/><path d="M13 3.500v6M10 6.500h6" stroke="#fff" stroke-width="1.600"/></symbol>
<symbol id="addmask" viewBox="0 0 24 24"><rect width="24" height="24" fill="#3b3f3d"/><path d="M3 5l8-3 3 6 6 4-4 5-1 6h-3l-2-9-5-1z" fill="#f7f7f7"/><circle cx="17" cy="7" r="5" fill="#2f7a31"/><path d="M17 4v6M14 7h6" stroke="#fff" stroke-width="1.600"/></symbol>
<symbol id="go" viewBox="0 0 24 24"><path d="M1 8.500h11V3l11 9-11 9v-5.500H1z" fill="#86c440" stroke="#538a1c"/><path d="M2.500 10h11V6.500" fill="none" stroke="#c8ea95" stroke-width="1.500"/></symbol>
<symbol id="lock" viewBox="0 0 24 24"><path d="M6 11V7c0-7 12-7 12 0v4" fill="none" stroke="#888" stroke-width="2.500"/><path d="M3 11h18v9c0 2-18 2-18 0z" fill="#555"/></symbol>
<symbol id="globe" viewBox="0 0 24 24"><path d="M12 1c6 0 7 6 11 11-4 4-7 11-11 11S5 16 1 12C5 7 6 1 12 1z" fill="#686868"/><path d="M12 1v22M1 12h22M4 7.500h16M4 16.500h16M12 1C5 8 5 16 12 23M12 1c7 7 7 15 0 22" fill="none" stroke="#d8d8d8" stroke-width="1.200"/></symbol>
<symbol id="chat" viewBox="0 0 24 24"><path d="M8 2h8c10 1 10 15 1 16.500l2 4.500c-4 0-6-2-7-4.500H8C-2 17-2 3 8 2z" fill="#555"/><g fill="#fff"><circle cx="7" cy="10.500" r="1.700"/><circle cx="12" cy="10.500" r="1.700"/><circle cx="17" cy="10.500" r="1.700"/></g></symbol>
<symbol id="float" viewBox="0 0 10 10"><path d="M3 3V1h6v5H7M3 2h6M1 4h6v5H1zM1 5h6" fill="none" stroke="#333" stroke-width="1.200"/></symbol>
<symbol id="close" viewBox="0 0 10 10"><path d="M1.500 1.500l7 7M8.500 1.500l-7 7" stroke="#333" stroke-width="2"/></symbol>
<symbol id="find" viewBox="0 0 24 24"><circle cx="9.500" cy="9.500" r="7.500" fill="none" stroke="#888" stroke-width="2"/><path d="M15 15l7.500 7.500" stroke="#888" stroke-width="3"/></symbol>
<symbol id="logo" viewBox="0 0 24 24"><circle cx="11.500" cy="11.500" r="8.500" fill="#f7f7f2" stroke="#589632" stroke-width="5"/><circle cx="11.500" cy="11.500" r="9.500" fill="none" stroke="#93b023" stroke-width="3"/><path d="M10 10h5l8 8v5h-5l-8-8z" fill="#589632" stroke="#f7f7f2"/><path d="M10 10h4l3 3-4 4-3-3z" fill="#e8732b"/></symbol>
</defs>
</svg>

<div class="window">
<header class="titlebar">
  <svg class="logo"><use href="#logo"/></svg>
  <h1>*Untitled Project - QGIS</h1>
  <div class="winbtns">
    <button class="wb" aria-label="Minimize"><svg viewBox="0 0 14 10"><rect x="1.500" y="5.500" width="11" height="3.500" fill="#fff" stroke="#43536e"/></svg></button>
    <button class="wb" aria-label="Maximize"><svg viewBox="0 0 14 10"><path d="M1.500.5h11v9h-11zM5 3.500h4v3H5z" fill="#fff" fill-rule="evenodd" stroke="#43536e"/></svg></button>
    <button class="wb wb-close" aria-label="Close"><svg viewBox="0 0 14 10"><path d="M3 1l8 8M11 1L3 9" stroke="#5c2a2a" stroke-width="4"/><path d="M3 1l8 8M11 1L3 9" stroke="#fff" stroke-width="2.500"/></svg></button>
  </div>
</header>

<div class="client">
<nav class="menubar">
  <button>Pro<u>j</u>ect</button><button><u>E</u>dit</button><button><u>V</u>iew</button><button><u>L</u>ayer</button><button><u>S</u>ettings</button><button><u>P</u>lugins</button><button>Vect<u>o</u>r</button><button><u>R</u>aster</button><button><u>D</u>atabase</button><button><u>W</u>eb</button><button>Pro<u>c</u>essing</button><button><u>H</u>elp</button>
</nav>

<div class="toolrow">
  <div class="toolbar">
    <button aria-label="New Project"><svg><use href="#new"/></svg></button><button aria-label="Open"><svg><use href="#open"/></svg></button><button aria-label="Save"><svg><use href="#save"/></svg></button><button aria-label="Save As"><svg><use href="#saveas"/></svg></button><button aria-label="New Print Layout"><svg><use href="#layout"/></svg></button><button aria-label="Layout Manager"><svg><use href="#layouts"/></svg></button><button aria-label="Style Manager"><svg><use href="#style"/></svg></button>
  </div>
  <div class="toolbar">
    <button class="pressed" aria-label="Pan Map"><svg><use href="#hand"/></svg></button><button aria-label="Pan to Selection"><svg><use href="#pansel"/></svg></button><button aria-label="Zoom In"><svg><use href="#zin"/></svg></button><button aria-label="Zoom Out"><svg><use href="#zout"/></svg></button><button aria-label="Native Resolution"><svg><use href="#z11"/></svg></button><button aria-label="Zoom Full"><svg><use href="#zfull"/></svg></button><button aria-label="Zoom to Selection"><svg><use href="#zsel"/></svg></button><button aria-label="Zoom to Layer"><svg><use href="#zlayer"/></svg></button><button aria-label="Zoom Last"><svg><use href="#zlast"/></svg></button><button aria-label="Zoom Next"><svg><use href="#znext"/></svg></button><button aria-label="New Map View"><svg><use href="#mapnew"/></svg></button><button aria-label="New Bookmark"><svg><use href="#bmnew"/></svg></button><button aria-label="Show Bookmarks"><svg><use href="#bm"/></svg></button><button aria-label="Refresh"><svg><use href="#refresh"/></svg></button>
  </div>
  <div class="toolbar">
    <button aria-label="Identify"><svg><use href="#info"/></svg></button><button aria-label="Run Action"><svg><use href="#action"/></svg></button><button class="arrow dim" aria-label="Actions"></button><button aria-label="Select"><svg><use href="#select"/></svg></button><button class="arrow dim" aria-label="Selection tools"></button><button aria-label="Select by Form"><svg><use href="#selform"/></svg></button><button class="arrow" aria-label="More selection"></button><button aria-label="Deselect"><svg><use href="#desel"/></svg></button><button aria-label="Attribute Table"><svg><use href="#table"/></svg></button><button aria-label="Field Calculator"><svg><use href="#abacus"/></svg></button><button aria-label="Toolbox"><svg><use href="#gear"/></svg></button><button aria-label="Statistics"><svg><use href="#sigma"/></svg></button><button aria-label="Measure"><svg><use href="#ruler"/></svg></button><button class="arrow" aria-label="Measure tools"></button><button aria-label="Map Tips"><svg><use href="#tip"/></svg></button><button aria-label="Text Annotation"><svg><use href="#anno"/></svg></button><button class="arrow" aria-label="Annotation tools"></button>
  </div>
</div>

<div class="toolrow">
  <div class="toolbar">
    <button aria-label="Data Source Manager"><svg><use href="#dsm"/></svg></button><button aria-label="New GeoPackage"><svg><use href="#gpkg"/></svg></button><button aria-label="New Shapefile"><svg><use href="#shp"/></svg></button><button aria-label="New SpatiaLite"><svg><use href="#feather"/></svg></button><button aria-label="New Scratch Layer"><svg><use href="#chip"/></svg></button>
  </div>
  <div class="toolbar">
    <button aria-label="Current Edits"><svg><use href="#edits"/></svg></button><button aria-label="Toggle Editing"><svg><use href="#edit"/></svg></button><button aria-label="Save Edits"><svg><use href="#saveed"/></svg></button><button aria-label="Add Record"><svg><use href="#addrec"/></svg></button><button aria-label="Vertex Tool"><svg><use href="#vertex"/></svg></button><button class="arrow dim" aria-label="Vertex tools"></button><button aria-label="Modify Attributes"><svg><use href="#multi"/></svg></button><button aria-label="Delete"><svg><use href="#trash"/></svg></button><button aria-label="Cut"><svg><use href="#cut"/></svg></button><button aria-label="Copy"><svg><use href="#copy"/></svg></button><button aria-label="Paste"><svg><use href="#paste"/></svg></button><button aria-label="Undo"><svg><use href="#undo"/></svg></button><button aria-label="Redo"><svg><use href="#redo"/></svg></button>
  </div>
  <div class="toolbar">
    <button aria-label="Labeling"><svg><use href="#label"/></svg></button><button aria-label="Diagrams"><svg><use href="#diagram"/></svg></button><button aria-label="Highlight Pinned"><svg><use href="#pinlab"/></svg></button><button aria-label="Pin Labels"><svg><use href="#pingray"/></svg></button><button aria-label="Show Labels"><svg><use href="#eyelab"/></svg></button><button aria-label="Move Label"><svg><use href="#movelab"/></svg></button><button aria-label="Rotate Label"><svg><use href="#rotlab"/></svg></button><button aria-label="Change Label"><svg><use href="#chglab"/></svg></button>
  </div>
  <div class="toolbar"><button aria-label="MetaSearch"><svg><use href="#metas"/></svg></button></div>
  <div class="toolbar">
    <button aria-label="Python Console"><svg><use href="#python"/></svg></button><button aria-label="Layer Stack"><svg><use href="#stack"/></svg></button><button aria-label="Quick WKT"><svg><use href="#wkt"/></svg></button>
  </div>
  <div class="toolbar"><button aria-label="Help Contents"><svg><use href="#help"/></svg></button></div>
  <div class="toolbar">
    <button class="pressed" aria-label="Coordinate Capture"><svg><use href="#cross"/></svg></button><button aria-label="GPS Tools"><svg><use href="#gps"/></svg></button><button aria-label="Topology Checker"><svg><use href="#topo"/></svg></button>
  </div>
</div>

<div class="toolrow">
  <div class="toolbar"><button aria-label="Plugin"><svg><use href="#plug"/></svg></button></div>
</div>

<main class="main">
<aside class="docks">
  <section class="dock">
    <header class="dockhead"><h2>Layers</h2><button aria-label="Float"><svg><use href="#float"/></svg></button><button aria-label="Close"><svg><use href="#close"/></svg></button></header>
    <div class="laytools">
      <button aria-label="Layer Styling"><svg><use href="#brush"/></svg></button><button aria-label="Add Group"><svg><use href="#addgrp"/></svg></button><button aria-label="Visibility"><svg><use href="#eye"/></svg></button><button aria-label="Filter Legend"><svg><use href="#filter"/></svg></button><button aria-label="Filter by Expression"><svg><use href="#eps"/></svg></button><button class="arrow" aria-label="Expression options"></button><button aria-label="Expand All"><svg><use href="#expand"/></svg></button><button aria-label="Collapse All"><svg><use href="#collapse"/></svg></button><button aria-label="Remove Layer"><svg><use href="#rmlay"/></svg></button>
    </div>
    <ul class="tree">
      <li class="selected"><svg class="i16"><use href="#table"/></svg><b><u>Distance matrix</u></b></li>
      <li><label><input type="checkbox" class="check" checked><i class="dot dot-y"></i><b>ne_10m</b></label></li>
      <li><label><input type="checkbox" class="check" checked><i class="dot dot-g"></i><b>signif</b></label></li>
    </ul>
    <div class="tabs"><button class="tab active">Layers</button><button class="tab">Browser</button></div>
  </section>

  <section class="dock">
    <header class="dockhead"><h2>Coordinate Capture</h2><button aria-label="Float"><svg><use href="#float"/></svg></button><button aria-label="Close"><svg><use href="#close"/></svg></button></header>
    <div class="capture">
      <button class="push" aria-label="Select CRS"><svg class="i18"><use href="#crs"/></svg></button><input type="text" aria-label="User CRS coordinate">
      <svg class="i22"><use href="#grid"/></svg><input type="text" aria-label="Canvas CRS coordinate">
      <button class="push" aria-label="Track mouse"><svg class="i18"><use href="#mouse"/></svg></button><button class="push" aria-label="Copy to Clipboard"></button>
      <span></span><button class="push" aria-label="Start Capture"></button>
    </div>
  </section>

  <section class="dock osm">
    <header class="dockhead"><h2>OSM place search</h2><button aria-label="Float"><svg><use href="#float"/></svg></button><button aria-label="Close"><svg><use href="#close"/></svg></button></header>
    <div class="osmbody">
      <p class="namelabel">Name contains...</p>
      <div class="limit"><label><input type="checkbox" class="check">Limit to extent</label><button class="push" aria-label="Search"><svg viewBox="0 0 12 9"><path d="M12 4.500H1M5 .5l-4 4 4 4" fill="none" stroke="#222"/></svg></button></div>
      <div class="results"><table><thead><tr><th>Name</th><th>Class</th><th>Infos</th><th class="rest"></th></tr></thead></table></div>
      <div class="osmbtns"><button class="push dots">...</button><button class="push sq" aria-label="Add to map"><svg class="i18"><use href="#addmap"/></svg></button><button class="push sq" aria-label="Add mask"><svg class="i18"><use href="#addmask"/></svg></button><button class="push zoom"><svg class="i18"><use href="#go"/></svg>Zoom</button></div>
    </div>
  </section>
</aside>

<svg class="canvas" role="img" aria-label="Map canvas">
<g transform="translate(-401 -153)" fill="none">
<polyline marker-start="url(#mg)" marker-mid="url(#mg)" marker-end="url(#mg)" points="641,411 638,460 618,464 625,467 631,467 631,483 631,490 598,523 631,530 677,516 664,520 691,549 701,535 743,513 750,513 770,493 779,497 796,525 796,523 809,516 812,523 834,529 845,526 849,526 783,539 876,484 898,483 868,493 873,500 878,516 822,166 862,197 891,227 923,232 931,190 931,194 947,190 1010,180 911,319 924,325 926,326 934,321 934,319 941,319 954,319 1142,161 1194,157 1224,154 1287,171 1125,194 1165,180 1175,177 1177,181 1173,183 1241,180 1185,203 1204,200 1210,200 1214,197 1241,196 1264,200 1267,200 1303,187 1132,220 1158,220 1158,217 1152,230 1185,217 1191,217 1188,220 1224,213 1241,217 1195,233 1257,243 1264,241 1276,239 1290,243 1290,250 1303,250 1112,259 1150,263 1158,259 1168,262 1167,265 1069,279 1082,276 1086,279 1073,312 1102,306 1106,302 1103,315 1115,302 1119,299 1132,292 1138,299 1152,292 1158,299 1168,292 1168,306 1162,312 1191,290 1195,296 1185,299 1188,299 1195,302 1191,325 1224,299 1208,283 1218,279 1231,286 1237,283 1244,276 1254,283 1258,283 1260,283 1267,283 1274,286 1274,276 1280,273 1288,272 1283,276 1268,270 1260,292 1293,264 1303,263 1300,266 1298,263 1306,265 1310,279 1305,282 1300,290 1307,292 1293,296 1301,299 1264,309 1277,312 1283,319 1287,319 1297,309 1300,312 1307,319 1310,329 970,539 987,539 970,546 976,547 973,551 978,556 973,557 1008,530 1013,549 1019,541 1023,539 1026,530 1032,528 1029,538 1040,528 1040,527 1046,525 1047,524 906,560 909,569 885,578 924,572 939,570 928,587 1115,520 1103,535 1101,533 1100,545 1095,553 1076,553 1059,556 1063,556 1063,559 1073,566 1092,564 1099,586 1122,592 1150,541 1175,543 1191,523 1221,549 1224,556 1254,513 1259,521 1264,530 1257,556 1257,566 918,355 1000,368 938,395 1046,421 906,457 829,556 567,555 571,556 576,556 582,556 598,556 499,605 618,744 664,707 730,754 753,552 736,564 750,570 750,572 796,584 726,583 704,622 776,622 763,620"/>
<polyline marker-start="url(#my)" marker-mid="url(#my)" marker-end="url(#my)" points="650,314 646,329 640,351 668,347 636,368 650,373 644,386 673,382 643,403 667,403 688,406 650,418 681,415 638,433 681,430 642,450 683,448 705,365 736,314 741,308 744,339 741,392 771,370 802,313 806,347 806,411 823,403 831,317 840,330 848,343 862,315 876,310 873,331 898,370 795,429 866,457 698,461 719,460 667,472 669,490 626,466 634,473 647,519 666,522 699,515 731,510 771,494 808,487 802,498 872,500 890,491 895,503 912,478 810,518 782,532 767,539 723,538 848,529 750,552 873,157 931,161 817,169 990,164 1045,167 910,178 951,181 875,187 1007,191 1032,194 939,207 890,221 969,232 1040,223 1029,234 978,255 908,264 949,286 975,305 1055,305 1033,314 1023,335 978,342 930,318 1170,169 1187,161 1178,174 1183,178 1170,181 1192,181 1167,188 1176,187 1156,194 1163,200 1174,196 1212,170 1209,181 1207,188 1213,193 1205,195 1199,197 1200,192 1212,198 1226,192 1228,175 1249,177 1233,181 1236,180 1238,183 1241,189 1241,199 1309,156 1304,184 1302,210 1294,224 1126,186 1093,183 1147,209 1130,220 1129,230 1170,219 1169,235 1087,234 1062,225 1072,245 1116,254 1180,257 1198,262 1212,245 1225,220 1223,227 1227,233 1231,244 1246,236 1290,245 1071,298 1107,308 1105,316 1123,321 1167,302 1172,301 1222,279 1239,335 1268,266 1287,271 1301,276 1310,264 1298,300 1270,302 1267,307 1302,315 1028,531 1061,530 1056,543 1021,542 1019,547 971,550 971,576 931,558 907,565 907,583 932,576 932,594 884,592 865,599 1035,599 1095,531 1118,529 1106,550 1080,554 1077,566 1131,570 1116,593 1155,527 1145,544 1172,541 1183,526 1190,546 1163,561 1195,575 1216,539 1215,550 1230,532 1237,553 1215,582 1219,583 1241,588 1217,608 1195,624 1223,632 1154,643 1127,651 1252,513 1264,527 1263,529 1262,543 1281,541 1282,565 1278,562 1291,573 1281,597 1260,566 1260,625 1271,642 1272,655 1293,638 1297,650 1008,373 1000,379 969,387 1215,361 1210,400 1241,394 1015,438 914,441 926,425 1228,450 752,559 736,563 781,546 725,582 733,588 744,595 711,613 702,621 745,625 763,619 795,615 830,579 677,635 677,654 647,646 623,677 664,700 611,739 607,763 596,787 482,788 781,690 838,720 854,701 886,686 909,663 961,632 1023,628 1049,672 1023,735 937,779 1104,689 1127,698 1280,687 1289,692 1241,749 1272,748"/>
</g>
</svg>
</main>

<footer class="status">
  <label class="locator"><svg class="i12"><use href="#find"/></svg><input type="text" placeholder="Type to locate (Ctrl+K)" aria-label="Locate"></label>
  <span class="message">1 legend entries removed.</span>
  <label class="field">Coordinate<input class="coord" type="text" value="-14.92,44.13"></label>
  <button class="flat" aria-label="Toggle extents"><svg class="i16"><use href="#mouse"/></svg></button>
  <label class="field">Scale<select><option>1:7283218</option></select></label>
  <button class="flat" aria-label="Lock scale"><svg class="i16"><use href="#lock"/></svg></button>
  <div class="field"><label for="mag">Magnifier</label><span class="spin"><input id="mag" type="text" value="100%"><span class="steps"><button aria-label="Increase magnifier"></button><button class="down" aria-label="Decrease magnifier"></button></span></span></div>
  <div class="field rot"><label for="rot">Rotation</label><span class="spin"><input id="rot" type="text" value="0.0 °"><span class="steps"><button aria-label="Increase rotation"></button><button class="down" aria-label="Decrease rotation"></button></span></span></div>
  <label class="field render"><input type="checkbox" class="check" checked>Render</label>
  <button class="flat epsg"><svg class="i16"><use href="#globe"/></svg>EPSG:4326</button>
  <button class="flat msgs" aria-label="Messages"><svg class="i16"><use href="#chat"/></svg></button>
  <span class="grip"></span>
</footer>
</div>
</div>

<menu class="context">
  <li><button>Show Feature Count</button></li>
  <li><button>Copy Layer</button></li>
  <li><button>Re<u>n</u>ame Layer</button></li>
  <li class="sep"></li>
  <li class="tall"><button><svg class="i16"><use href="#dup"/></svg><u>D</u>uplicate Layer</button></li>
  <li class="tall"><button><svg class="i16"><use href="#rmlay"/></svg><u>R</u>emove Layer...</button></li>
  <li class="sep"></li>
  <li class="tall hover"><button><svg class="i16"><use href="#table"/></svg><u>O</u>pen Attribute Table</button></li>
  <li class="tall"><button><svg class="i16"><use href="#edit"/></svg>Toggle Editing</button></li>
  <li class="tall"><button><u>F</u>ilter...</button></li>
  <li class="sep"></li>
  <li class="sub"><button>Export</button></li>
  <li class="sep"></li>
  <li class="sub"><button>Styles</button></li>
  <li><button><u>P</u>roperties...</button></li>
</menu>
<svg class="pointer" viewBox="0 0 13 20"><path d="M1 1v15l3.500-3.200 2.500 6 2.300-1-2.500-5.800h4.700z" fill="#fff" stroke="#222"/></svg>
</body>
</html>
```
FILE: styles.css
```css
* { box-sizing: border-box; }
body {
  margin: 0;
  font: 12px/16px "Noto Sans", "Open Sans", sans-serif;
  color: #111;
  background: #2b3038;
}
button, input, select { font: inherit; color: inherit; }
button { margin: 0; padding: 0; border: 0; background: none; }
h1, h2, p, ul, menu { margin: 0; padding: 0; font-size: inherit; font-weight: normal; }
ul, menu { list-style: none; }
u { text-underline-offset: 2px; }
.defs { position: absolute; width: 0; height: 0; }
.i12 { width: 14px; height: 14px; }
.i16 { width: 16px; height: 16px; }
.i18 { width: 18px; height: 18px; }
.i22 { width: 22px; height: 22px; }

.window {
  height: 100vh;
  display: flex;
  flex-direction: column;
  padding: 0 8px 2px 3px;
  background: linear-gradient(to right, transparent calc(100% - 2px), #17191d 0), linear-gradient(#aebfdd 0, #b4c6e4 40px, #c9cfd3 90px, #d6dadc 60%, #8fa3ad 75%, #c7ccd0 90%, #9aa3a9);
}

/* title bar */
.titlebar {
  flex: 0 0 26px;
  display: flex;
  align-items: center;
  margin: 0 -6px 0 -3px;
  background:
    radial-gradient(ellipse 24px 9px at 190px 12px, #c4c6ca, transparent),
    radial-gradient(ellipse 14px 7px at 244px 25px, #8fa3c4, transparent),
    radial-gradient(ellipse 8px 5px at 310px 25px, #d9cf9d, transparent),
    linear-gradient(to right, transparent 210px, #c6cad2 219px, transparent 224px),
    radial-gradient(ellipse 40px 9px at 445px 12px, #e2e4ea, transparent),
    linear-gradient(to right, transparent calc(100% - 145px), #93aad2 calc(100% - 110px)),
    linear-gradient(#b9c8e2 0, #e3e9f3 3px, #fbfbfc 8px, #f7f7f8 14px, #dcdee0 18px, #f1f2f3 22px, #eceded);
}
.titlebar h1 { flex: 1; padding: 0 0 2px 5px; }
.logo { width: 17px; height: 17px; margin-left: 3px; }
.winbtns {
  display: flex;
  align-self: flex-start;
  height: 17px;
  margin-right: 6px;
  border: 1px solid #3f4b61;
  border-top: 0;
  border-radius: 0 0 5px 5px;
  overflow: hidden;
}
.wb { width: 28px; display: grid; place-items: center; border-right: 1px solid #5a6780; background: linear-gradient(#c7d3e6, #8698b8 45%, #6a7ea3 50%, #a6b9d9); }
.wb svg { width: 14px; height: 10px; }
.wb-close { width: 46px; border: 0; background: linear-gradient(#e0a397, #c35540 45%, #a8200f 50%, #cc6248); }

.client {
  flex: 1;
  min-height: 0;
  display: flex;
  flex-direction: column;
  border: 1px solid #50545a;
  background: #efefef;
}

/* menus and toolbars */
.menubar {
  flex: 0 0 23px;
  display: flex;
  gap: 17px;
  padding: 0 8px;
  border-bottom: 1px solid #b5b8c4;
  background: linear-gradient(#fff 0, #f4f6fb 8px, #d5dbee 9px, #e1e6f6);
}
.toolrow {
  flex: 0 0 34px;
  display: flex;
  border-top: 1px solid #fafafa;
  border-bottom: 1px solid #b9b9b9;
}
.toolbar { display: flex; align-items: center; padding: 0 1px 0 10px; border-right: 1px solid #b4b4b4; position: relative; }
.toolbar::before {
  content: "";
  position: absolute;
  left: 4px;
  top: 3px;
  bottom: 3px;
  width: 2px;
  background: repeating-linear-gradient(#a5a5a5 0 2px, transparent 2px 4px);
}
.toolbar:last-child { border-right: 0; }
.toolbar button { width: 31px; height: 29px; display: grid; place-items: center; }
.toolbar svg { width: 24px; height: 24px; }
.toolbar .pressed { border: 1px solid #777; border-radius: 3px; background: linear-gradient(#d0d0d0, #e8e8e8); }
.toolbar .arrow, .laytools .arrow { width: 12px; }
.arrow::before { content: ""; border: 4px solid transparent; border-top-color: #222; border-bottom: 0; }
.arrow.dim::before { border-top-color: #777; }

.main { flex: 1; min-height: 0; display: flex; }
.docks { flex: 0 0 396px; display: flex; flex-direction: column; padding: 1px 4px 0 0; }

/* docks */
.dockhead {
  display: flex;
  align-items: center;
  height: 19px;
  padding: 0 1px 0 4px;
  border: 1px solid #b9b9b9;
  background: #d9d9d9;
}
.dockhead h2 { flex: 1; padding-top: 2px; }
.dockhead button { width: 21px; display: grid; place-items: center; }
.dockhead svg { width: 10px; height: 10px; }
.laytools { display: flex; height: 28px; align-items: center; padding-left: 1px; }
.laytools button { width: 23px; height: 24px; display: grid; place-items: center; }
.laytools svg { width: 16px; height: 16px; }
.tree { height: 71px; border: 1px solid #828790; background: #fff; padding-left: 21px; }
.tree li { height: 21px; display: flex; align-items: center; padding-left: 2px; }
.tree li label { display: flex; align-items: center; }
.tree .selected { border: 1px dotted #111; border-radius: 2px; padding-left: 1px; background: linear-gradient(#edf4fd, #cbe1fc); }
.selected b { margin-left: 6px; }
.dot { width: 7px; height: 7px; margin: 0 10px 0 11px; border: 1px solid #555; border-radius: 50%; }
.dot-y { background: #d3b13a; }
.dot-g { background: #6f9b72; }
.check {
  appearance: none;
  width: 13px;
  height: 13px;
  margin: 0;
  border: 1px solid #8e8f8f;
  background: linear-gradient(135deg, #cdd2d8, #f6f6f6);
  box-shadow: inset 0 0 0 1px #f4f4f4;
  display: inline-grid;
  place-items: center;
}
.check:checked::before { content: ""; width: 5px; height: 9px; border: solid #33539b; border-width: 0 2px 2px 0; transform: rotate(38deg); }
.tabs { display: flex; align-items: flex-start; height: 25px; font: 10px/18px "Liberation Mono", monospace; }
.tab { height: 18px; padding: 0 9px; border: 1px solid #898c95; border-top: 0; background: linear-gradient(#ececec, #dadada); }
.tab.active { height: 20px; width: 62px; background: #fff; }

.push { border: 1px solid #777; border-radius: 3px; background: linear-gradient(#f3f3f3, #ebebeb 48%, #dadada 52%, #cdcdcd); display: inline-flex; align-items: center; justify-content: center; }
.capture {
  display: grid;
  grid-template-columns: 21px 1fr;
  grid-template-rows: 20px 20px 21px 22px;
  gap: 8px 20px;
  padding: 12px 9px 15px 10px;
  justify-items: stretch;
}
.capture input { border: 1px solid #dfe3ea; border-top-color: #b8bcc2; min-width: 0; border-radius: 1px; }
.capture .push svg { flex: none; }

.osm { flex: 1; display: flex; flex-direction: column; min-height: 0; }
.osmbody { flex: 1; min-height: 0; display: flex; flex-direction: column; padding-left: 8px; font: 10px/14px "Liberation Mono", monospace; }
.namelabel { padding: 5px 0; }
.limit { display: flex; justify-content: space-between; align-items: center; height: 24px; padding-right: 1px; }
.limit label { display: flex; align-items: center; gap: 4px; }
.limit .push { width: 29px; height: 16px; }
.limit svg { width: 12px; height: 9px; }
.results { flex: 1; margin-top: 4px; border: 1px solid #828790; background: #fff; }
.results table { width: 100%; border-collapse: collapse; font: 11px/16px "Noto Sans", sans-serif; }
.results th { height: 23px; padding: 0 4px; font-weight: normal; border-right: 1px solid #dcdee1; border-bottom: 1px solid #d5d5d5; background: linear-gradient(#fff 0, #fff 40%, #f4f5f7 45%, #f1f2f4); }
.results .rest { width: 100%; border-right: 0; }
.osmbtns { display: flex; align-items: center; gap: 52px; padding: 7px 0 1px 45px; }
.dots { width: 35px; height: 16px; }
.sq { width: 21px; height: 20px; }
.zoom { width: 61px; height: 20px; gap: 3px; }

.canvas { flex: 1; min-width: 0; height: 100%; border: 1px solid #828790; background: #fff; overflow: hidden; }

/* status bar */
.status { flex: 0 0 27px; display: flex; align-items: center; padding-left: 4px; font: 10px/14px "Liberation Mono", monospace; white-space: nowrap; }
.status input[type="text"], .status select { border: 0; background: transparent; padding: 0; height: 18px; outline: 0; }
.locator, .status .coord, .spin, .status select { height: 20px; border: 1px solid #e0e3e9; border-top-color: #abadb3; background: #fff; }
.locator { width: 247px; display: flex; align-items: center; padding-left: 7px; gap: 6px; }
.locator input { flex: 1; min-width: 0; }
.locator input::placeholder { color: #777; opacity: 1; }
.message { flex: 1; padding-left: 9px; }
.field { display: flex; align-items: center; gap: 4px; }
.status input[type="text"].coord { width: 81px; height: 20px; border: 1px solid #e0e3e9; border-top-color: #abadb3; background: #fff; padding: 0 2px; }
.flat { display: flex; align-items: center; gap: 3px; margin: 0 8px 0 9px; }
.status select {
  appearance: none;
  width: 80px;
  height: 20px;
  padding: 0 2px;
  border: 1px solid #e0e3e9;
  border-top-color: #abadb3;
  background: linear-gradient(to bottom right, #111 50%, transparent 50%) right 4px center / 4px 4px no-repeat, linear-gradient(to bottom left, #111 50%, transparent 50%) right 8px center / 4px 4px no-repeat, #fff;
}
.spin { width: 86px; display: flex; align-items: center; padding-left: 2px; }
.spin input { flex: 1; min-width: 0; }
.steps { display: flex; flex-direction: column; }
.steps button { width: 14px; height: 9px; display: grid; place-items: center; border: 1px solid #b5b8c0; background: #f1f2f5; }
.steps button::before { content: ""; border: 3px solid transparent; border-top: 0; border-bottom: 4px solid #4a68a8; }
.steps .down::before { border-bottom: 0; border-top: 4px solid #4a68a8; }
.rot { margin-left: 9px; gap: 8px; }
.render { margin-left: 7px; }
.status .epsg { margin: 0 0 0 17px; }
.status .msgs { margin: 0 16px 0 22px; }
.grip { width: 9px; height: 9px; margin: 12px 1px 0 0; background: radial-gradient(#aaa 1px, transparent 1px) 0 0 / 3px 3px; clip-path: polygon(100% 0, 100% 100%, 0 100%); }

/* context menu */
.context {
  position: absolute;
  left: 114px;
  top: 212px;
  width: 196px;
  padding: 3px 2px 1px;
  border: 1px solid #979797;
  background: linear-gradient(to right, transparent 28px, #dcdcdc 28px 29px, #fff 29px 30px, transparent 30px), #f0f0f0;
  box-shadow: 3px 3px 3px rgba(0, 0, 0, .5);
}
.context li { height: 22px; border: 1px solid transparent; border-radius: 3px; }
.context .tall { height: 23px; }
.context button { width: 100%; height: 100%; padding-left: 31px; display: flex; align-items: center; position: relative; white-space: pre; }
.context svg { position: absolute; left: 2px; }
.context .sep { height: 8px; margin-left: 29px; border: 0; border-radius: 0; background: linear-gradient(transparent 4px, #dcdcdc 4px 5px, #fff 5px 6px, transparent 6px); }
.context .tall + .sep, .context .sub + .sep { height: 9px; }
.context .hover { border-color: #aecff7; background: linear-gradient(#eff3fa, #e6edf7); }
.context .sub button::after { content: ""; margin-left: auto; margin-right: 11px; border: 4px solid transparent; border-left: 5px solid #111; border-right: 0; }
.pointer { position: absolute; left: 216px; top: 358px; width: 13px; height: 20px; }
```
